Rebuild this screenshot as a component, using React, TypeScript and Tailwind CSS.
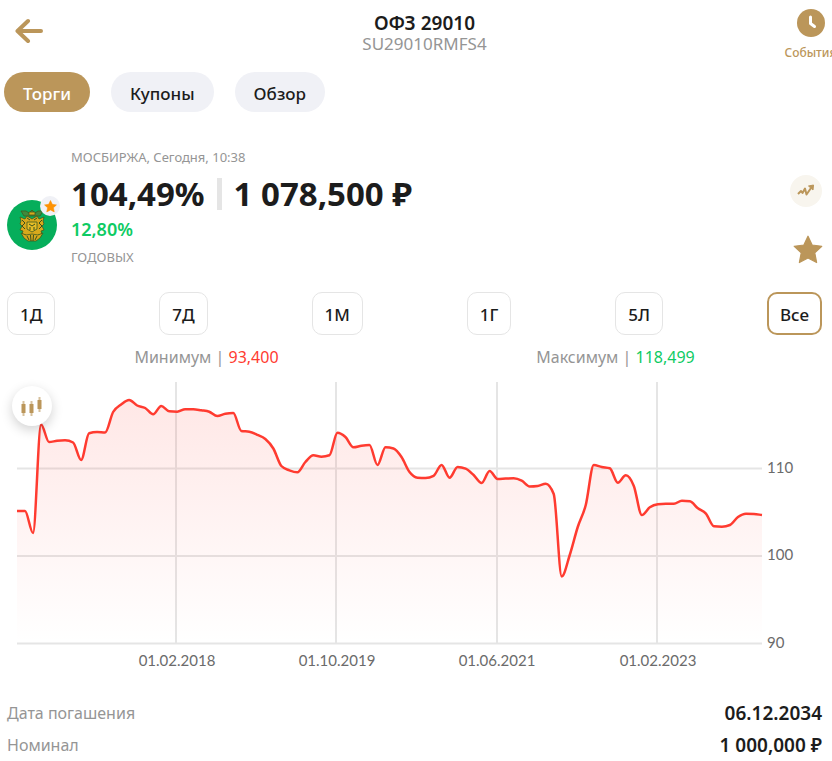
import React, { useState } from "react";
import { clsx } from "clsx";

type Point = [number, number];

const PLOT = { left: 17, right: 762, top: 382, bottom: 643 };

// Vertical positions of the price line, evenly spaced in time.
const LEVELS = [
  511, 511, 533, 424.5, 442, 440.8, 440.3, 442.5, 460, 433.3, 432, 432.5, 412, 404.5, 400, 405.5, 408, 414.3, 406,
  411.3, 411.7, 409.2, 409.2, 410.3, 411.7, 416, 413.7, 413, 431, 431.7, 434.8, 439, 448.5, 466, 470.3, 472.3, 462,
  455.3, 456.7, 455.3, 432.7, 437, 447.3, 445.7, 445, 465, 447.3, 448.5, 457, 472, 477.7, 478, 475.8, 465, 477.7, 467,
  468.7, 475, 483, 471, 479, 478.6, 478.3, 480.7, 486.5, 486, 483.7, 494, 576.5, 555, 527, 505, 465, 467, 468.3,
  482.7, 475.3, 486, 515, 507.3, 504.3, 503.8, 503.8, 500.7, 501.3, 508.3, 513.7, 526.3, 526.7, 525, 517, 513.7, 514,
  515,
];

const points: Point[] = LEVELS.map((y, i) => [
  PLOT.left + ((PLOT.right - PLOT.left) * i) / (LEVELS.length - 1),
  y,
]);

// Monotone cubic curve through all points.
function monotonePath(pts: Point[]): string {
  const n = pts.length;
  const slope = pts.slice(1).map((p, i) => (p[1] - pts[i][1]) / (p[0] - pts[i][0]));
  const tangent = pts.map((_, i) => {
    if (i === 0) return slope[0];
    if (i === n - 1) return slope[n - 2];
    const a = slope[i - 1];
    const b = slope[i];
    if (a * b <= 0) return 0;
    return Math.sign(a) * Math.min(Math.abs(a), Math.abs(b), Math.abs(a + b) / 4) * 2;
  });
  let d = `M${pts[0][0]},${pts[0][1]}`;
  for (let i = 1; i < n; i++) {
    const [x0, y0] = pts[i - 1];
    const [x1, y1] = pts[i];
    const h = (x1 - x0) / 3;
    d += `C${x0 + h},${y0 + h * tangent[i - 1]} ${x1 - h},${y1 - h * tangent[i]} ${x1},${y1}`;
  }
  return d;
}

const linePath = monotonePath(points);
const areaPath = `${linePath}L${PLOT.right},${PLOT.bottom}L${PLOT.left},${PLOT.bottom}Z`;

const STAR = "M12 1L15.300 8L23 9L17.400 14.300L18.900 22L12 18.400L5.100 22L6.600 14.300L1 9L8.700 8Z";

function Emblem() {
  return (
    <div className="relative h-[50px] w-[50px] shrink-0 rounded-full bg-[#06ae5b]">
      <svg viewBox="0 0 50 50" className="h-full w-full" aria-hidden="true">
        <g stroke="#3f5a20" strokeWidth="0.8" fill="#d7a91c">
          <path d="M14 11l5 0 3 2 3-3 3 3 3-2 5 0-3 5H17z" fill="#3f8a3c" />
          <path d="M13 17l5 2 2-3 5 3 5-3 2 3 5-2-1 4 1 3-2 2 2 4-3 1 1 3-4 1-3 3-3 2-3-2-3-3-4-1 1-3-3-1 2-4-2-2 1-3z" />
          <path d="M22 12h6v3h-6z" />
          <path d="M14 33l5 2 6-1 6 1 5-2-3 5-4 3h-8l-4-3z" />
          <path d="M20 22h10v7l-5 3-5-3z" fill="#e6bd27" />
        </g>
        <g stroke="#39501f" strokeWidth="1" fill="none">
          <path d="M22 24l3 2 3-2M23 30v-3M27 30v-3M15 20l3 3-3 3 3 3M35 20l-3 3 3 3-3 3M20 36l2 4M23.500 35l.500 6M26.500 35l-.500 6M30 36l-2 4M20 18l3 2M30 18l-3 2" />
        </g>
      </svg>
      <span className="absolute -top-1 -right-[3px] flex h-5 w-5 items-center justify-center rounded-full bg-[#f0f1f6]">
        <svg viewBox="0 0 24 24" className="h-[13px] w-[13px]" fill="#fd9203" stroke="#fd9203" aria-hidden="true">
          <path d={STAR} />
        </svg>
      </span>
    </div>
  );
}

function Header() {
  return (
    <header className="grid h-[72px] grid-cols-[60px_1fr_43px]">
      <button type="button" aria-label="Назад" className="mt-[18px] ml-[15px] h-[26px] w-7">
        <svg viewBox="0 0 28 26" className="h-full w-full" fill="none" stroke="#bb965a" strokeWidth="4" strokeLinecap="round" strokeLinejoin="round">
          <path d="M26 13H3M13 3L2.500 13L13 23" />
        </svg>
      </button>
      <div className="pt-3 text-center">
        <h1 className="text-[19px] leading-[22px] font-semibold">ОФЗ 29010</h1>
        <p className="text-[17px] leading-5 text-[#959595]">SU29010RMFS4</p>
      </div>
      <a href="#events" className="flex flex-col items-center pt-[9px] text-[#bb965a]">
        <svg viewBox="0 0 28 28" className="h-7 w-7 shrink-0" aria-hidden="true">
          <circle cx="14" cy="14" r="14" fill="#bb965a" />
          <path d="M13.500 8v6.500l4 3" fill="none" stroke="white" strokeWidth="3" strokeLinecap="round" strokeLinejoin="round" />
        </svg>
        <span className="mt-2 text-xs leading-4 font-medium">События</span>
      </a>
    </header>
  );
}

function Tabs() {
  const [active, setActive] = useState("Торги");
  return (
    <nav className="flex gap-[21px] px-1">
      {["Торги", "Купоны", "Обзор"].map((tab) => (
        <button
          key={tab}
          type="button"
          onClick={() => setActive(tab)}
          className={clsx(
            "h-10 rounded-full px-[19px] pt-1 text-[17px] leading-6 font-medium",
            tab === active ? "bg-[#bb965a] text-white" : "bg-[#f0f1f6]",
          )}
        >
          {tab}
        </button>
      ))}
    </nav>
  );
}

function Quote() {
  return (
    <section className="mt-9 flex items-start pr-2.5 pl-[7px]">
      <div className="mt-[52px]">
        <Emblem />
      </div>
      <div className="pl-3.5">
        <p className="text-[13px] leading-[18px] text-[#959595]">МОСБИРЖА, Сегодня, 10:38</p>
        <p className="mt-2 flex h-10 items-center text-[33px] leading-10 font-bold whitespace-nowrap">
          104,49%
          <span className="mx-3 h-8 w-[5px] bg-[#e5e5e5]" />
          1 078,500 ₽
        </p>
        <p className="mt-[3px] text-lg leading-6 font-semibold text-[#0ecb63]">12,80%</p>
        <p className="mt-[7px] text-[13px] leading-[18px] text-[#959595]">ГОДОВЫХ</p>
      </div>
      <div className="mt-[27px] ml-auto flex w-8 flex-col items-end gap-7">
        <button type="button" aria-label="Динамика" className="flex h-8 w-8 items-center justify-center rounded-full bg-[#f8f5ee]">
          <svg viewBox="0 0 18 14" className="h-3.5 w-[18px]" fill="none" stroke="#bb965a" strokeWidth="2" strokeLinejoin="round">
            <path d="M1 10l3-3 1.500 2L8 4.500l1.500 6L14 4" />
            <path d="M11.500 2l5-1-.500 5z" fill="#bb965a" strokeWidth="1" />
          </svg>
        </button>
        <button type="button" aria-label="В избранном" className="-mr-px h-[30px] w-[30px]">
          <svg viewBox="0 0 24 24" className="h-full w-full" fill="#bb965a" stroke="#bb965a" strokeLinejoin="round">
            <path d={STAR} />
          </svg>
        </button>
      </div>
    </section>
  );
}

function Periods() {
  const [active, setActive] = useState("Все");
  return (
    <div className="mt-[26px] flex justify-between pr-2.5 pl-[7px]">
      {["1Д", "7Д", "1М", "1Г", "5Л", "Все"].map((period) => (
        <button
          key={period}
          type="button"
          onClick={() => setActive(period)}
          className={clsx(
            "h-[43px] rounded-[10px] pt-0.5 text-[17px] font-medium",
            period === active ? "border-2 border-[#bb965a] px-[11px]" : "border border-[#e5e5e5] px-3",
          )}
        >
          {period}
        </button>
      ))}
    </div>
  );
}

function Chart() {
  return (
    <div className="relative">
      <svg viewBox="0 380 832 300" className="block h-auto w-full" role="img" aria-label="График цены">
        <defs>
          <linearGradient id="fade" x1="0" y1="400" x2="0" y2="643" gradientUnits="userSpaceOnUse">
            <stop offset="0" stopColor="#ff3b30" stopOpacity="0.12" />
            <stop offset="1" stopColor="#ff3b30" stopOpacity="0" />
          </linearGradient>
        </defs>
        <g stroke="#e5e5e5" strokeWidth="2">
          {[468.5, 556, 643.5].map((y) => (
            <line key={y} x1={PLOT.left} x2={PLOT.right} y1={y} y2={y} />
          ))}
          {[176, 336, 497, 657].map((x) => (
            <line key={x} x1={x} x2={x} y1={PLOT.top} y2={PLOT.bottom} />
          ))}
        </g>
        <path d={areaPath} fill="url(#fade)" />
        <path d={linePath} fill="none" stroke="#ff3b30" strokeWidth="2.500" strokeLinejoin="round" />
        <g className="font-['Lato',sans-serif] text-[15px]" fill="#6b6b6b">
          <text x="767" y="473">110</text>
          <text x="767" y="560">100</text>
          <text x="767" y="648">90</text>
          <g textAnchor="middle">
            <text x="177" y="666">01.02.2018</text>
            <text x="337" y="666">01.10.2019</text>
            <text x="497" y="666">01.06.2021</text>
            <text x="658" y="666">01.02.2023</text>
          </g>
        </g>
      </svg>
      <button
        type="button"
        aria-label="Свечной график"
        className="absolute top-[6px] left-3 flex h-10 w-10 items-center justify-center rounded-full bg-white shadow-[0_4px_12px_rgba(0,0,0,0.18)]"
      >
        <svg viewBox="0 0 22 20" className="h-5 w-[22px]" fill="#bb965a">
          <path d="M1.500 5h2v15h-2zM9.500 5h2v15h-2zM17.500 1h2v15h-2z" opacity="0.6" />
          <path d="M.5 8h4v9h-4zM8.500 8h4v9h-4zM16.500 4h4v9h-4z" />
        </svg>
      </button>
    </div>
  );
}

export default function App() {
  return (
    <main className="w-full overflow-hidden bg-white font-['Noto_Sans','Open_Sans',sans-serif] text-[#1c1c1c]">
      <Header />
      <Tabs />
      <Quote />
      <Periods />
      <div className="mt-2.5 grid grid-cols-2 pr-3 pl-0.5 text-center text-base leading-6 text-[#959595]">
        <p>
          Минимум | <span className="text-[#ff3b30]">93,400</span>
        </p>
        <p>
          Максимум | <span className="text-[#0ecb63]">118,499</span>
        </p>
      </div>
      <div className="mt-[11px]">
        <Chart />
      </div>
      <dl className="mt-[17px] pr-2.5 pl-[7px] text-base leading-8">
        <div className="flex justify-between">
          <dt className="text-[#959595]">Дата погашения</dt>
          <dd className="text-[19px] leading-8 font-semibold">06.12.2034</dd>
        </div>
        <div className="flex justify-between">
          <dt className="text-[#959595]">Номинал</dt>
          <dd className="text-[19px] leading-8 font-semibold">1 000,000 ₽</dd>
        </div>
      </dl>
    </main>
  );
}
